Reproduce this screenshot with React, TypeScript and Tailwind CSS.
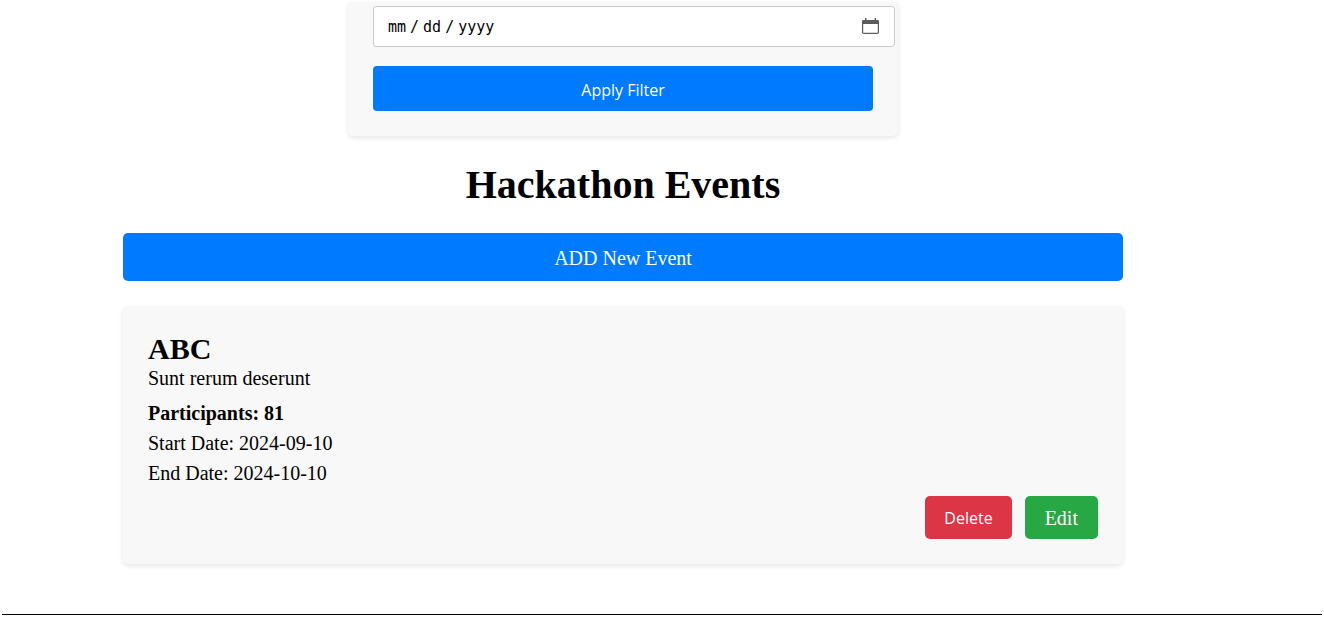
type HackathonEvent = {
  title: string;
  description: string;
  participants: number;
  start: string;
  end: string;
};

const events: HackathonEvent[] = [
  {
    title: "ABC",
    description: "Sunt rerum deserunt",
    participants: 81,
    start: "2024-09-10",
    end: "2024-10-10",
  },
];

function CalendarIcon() {
  return (
    <svg
      className="pointer-events-none absolute right-4 h-[17px] w-[17px]"
      viewBox="0 0 17 17"
      fill="none"
      aria-hidden="true"
    >
      <rect x="0.6" y="2.6" width="15.8" height="12.8" rx="1.2" stroke="#5b5b5b" strokeWidth="1.2" />
      <path d="M0 3.5Q0 2 1.5 2H15.5Q17 2 17 3.5V6H0Z" fill="#5b5b5b" />
      <path d="M3.7 0V3M13.3 0V3" stroke="#5b5b5b" strokeWidth="1.4" />
    </svg>
  );
}

function FilterPanel() {
  return (
    <form
      className="w-full max-w-[550px] rounded-b-[5px] bg-[#f8f8f8] px-[25px] pt-1 pb-[25px] shadow-[0_2px_5px_rgba(0,0,0,0.1)]"
      onSubmit={(e) => e.preventDefault()}
    >
      <div className="relative flex w-[calc(100%+22px)] items-center">
        <input
          type="date"
          aria-label="End date"
          className="h-[41px] w-full rounded-[3px] border border-[#cccccc] bg-white px-[13px] font-['DejaVu_Sans_Mono',monospace] text-[15px] text-black [&::-webkit-calendar-picker-indicator]:opacity-0 [&::-webkit-datetime-edit-fields-wrapper]:p-0 [&::-webkit-datetime-edit-text]:px-[3px]"
        />
        <CalendarIcon />
      </div>
      <button
        type="submit"
        className="mt-[19px] h-[45px] w-full rounded-[4px] bg-[#007bff] pt-0.5 font-['Open_Sans',sans-serif] text-base text-white"
      >
        Apply Filter
      </button>
    </form>
  );
}

function EventCard({ event }: { event: HackathonEvent }) {
  return (
    <li className="rounded-[5px] bg-[#f8f8f8] p-[25px] shadow-[0_2px_5px_rgba(0,0,0,0.1)]">
      <h2 className="-mb-1 text-[30px] leading-9 font-bold">{event.title}</h2>
      <p>{event.description}</p>
      <p className="mt-[5px] font-bold">Participants: {event.participants}</p>
      <p>Start Date: {event.start}</p>
      <p>End Date: {event.end}</p>
      <div className="mt-2 flex justify-end gap-[13px]">
        <button
          type="button"
          className="h-[43px] rounded-[5px] bg-[#dc3545] px-[19px] font-['Open_Sans',sans-serif] text-base text-white"
        >
          Delete
        </button>
        <a href="#edit" className="flex h-[43px] items-center rounded-[5px] bg-[#28a745] px-5 text-white">
          Edit
        </a>
      </div>
    </li>
  );
}

export default function App() {
  return (
    <div className="bg-white px-0.5 pt-0.5 font-['Liberation_Serif',serif] text-[20px] leading-[30px] text-black">
      <main className="mr-[78px] flex flex-col items-center">
        <FilterPanel />
        <section className="mt-[25px] w-full max-w-[1000px]">
          <h1 className="text-center text-[40px] leading-[48px] font-bold">Hackathon Events</h1>
          <a
            href="#new"
            className="mt-6 flex h-12 items-center justify-center rounded-[5px] bg-[#007bff] pt-0.5 text-white"
          >
            ADD New Event
          </a>
          <ul className="mt-[25px] flex flex-col gap-6">
            {events.map((event) => (
              <EventCard key={event.title} event={event} />
            ))}
          </ul>
        </section>
      </main>
      <hr className="mt-[50px] border-t border-black" />
    </div>
  );
}
